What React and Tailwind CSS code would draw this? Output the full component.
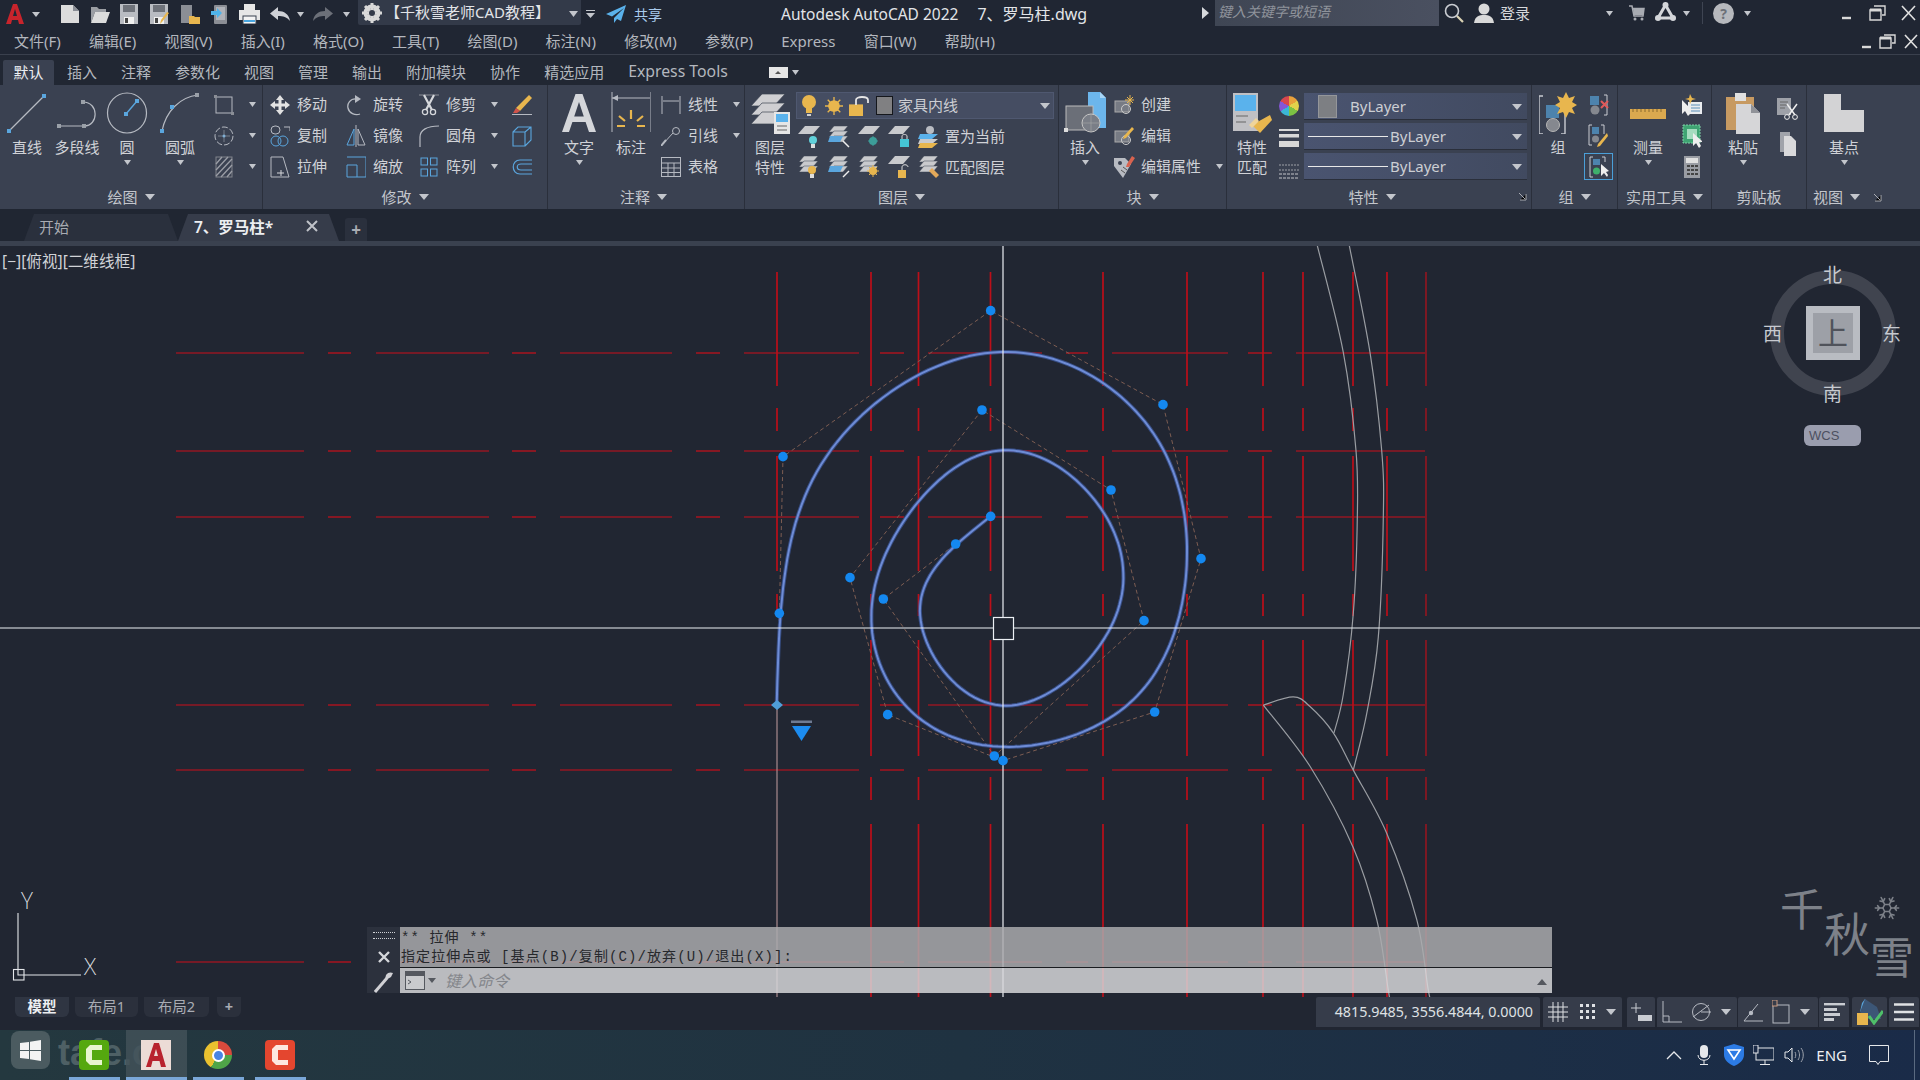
import React from "react";
import { Snowflake } from "lucide-react";

const G = "#b6bac2", B = "#5aa6de", Y = "#e8b64e", W = "#d6d8dc";

const I = ({ w, h, children, className = "" }) => (
  <svg width={w} height={h} viewBox={`0 0 ${w} ${h}`} fill="none" className={`shrink-0 ${className}`}>{children}</svg>
);
const Caret = ({ className = "", w = 8, h = 5, c = "#c3c6cc" }) => (
  <I w={w} h={h} className={className}><polygon points={`0,0 ${w},0 ${w / 2},${h}`} fill={c} /></I>
);

/* ---------- title bar icons ---------- */
const Logo = () => (<I w={18} h={20}><path d="M0 20 L7 0 H11 L18 20 H13 L12 16 H6 L5 20Z M7 12 H11 L9 5Z" fill="#c8242c" fillRule="evenodd" /></I>);
const NewDoc = () => (<I w={20} h={20}><path d="M1 1H13L19 7V19H1Z" fill="#dcdcdc" /><path d="M13 1V7H19" fill="#8a8e96" /></I>);
const Open = () => (<I w={20} h={20}><path d="M1 3H7L9 5H16V8H5L1 19Z" fill="#9b9ea4" /><path d="M5 8H20L16 19H1Z" fill="#dcdcdc" /></I>);
const Save = ({ pen }) => (<I w={20} h={20}><path d="M1 0H19V20H1Z" fill="#b9bcc2" /><rect x="4" y="1" width="12" height="7" fill="#6e727a" /><rect x="5" y="13" width="10" height="7" fill="#f0f0f0" /><rect x="6" y="14" width="3" height="5" fill="#444" />{pen && <path d="M20 9 L13 18 L11 20 L12 16 L18 8Z" fill={Y} />}</I>);
const Publish = () => (<I w={20} h={20}><rect x="1" y="1" width="11" height="18" fill="#8b8e95" /><path d="M9 12H14L15 13H20V20H9Z" fill={Y} /></I>);
const Phone = () => (<I w={17} h={20}><rect x="3" y="1" width="13" height="19" rx="1" fill="#8b8e95" /><rect x="5" y="3" width="9" height="13" fill="#b0b3ba" /><path d="M0 7H6V4L11 9L6 14V11H0Z" fill="#4fb3ea" /></I>);
const Print = () => (<I w={21} h={20}><rect x="5" y="0" width="11" height="6" fill="#e6e6e6" /><rect x="0" y="6" width="21" height="10" fill="#e6e6e6" /><rect x="4" y="12" width="13" height="8" fill="#f4f4f4" stroke="#39404f" /><rect x="5" y="16" width="11" height="2" fill="#4aa6e0" /></I>);
const Undo = ({ c = "#cfd1d6" }) => (<I w={20} h={16}><path d="M8 1V5C14 5 19 8 20 15C17 11 13 10 8 10V14L0 7.5Z" fill={c} /></I>);
const Redo = () => (<I w={20} h={16}><path d="M12 1V5C6 5 1 8 0 15C3 11 7 10 12 10V14L20 7.5Z" fill="#6c7079" /></I>);
const Gear = () => (<I w={20} h={20}><circle cx="10" cy="10" r="6.5" stroke="#d9d9d9" strokeWidth="4" /><path d="M10 0V20M0 10H20M3 3L17 17M17 3L3 17" stroke="#d9d9d9" strokeWidth="3" /><circle cx="10" cy="10" r="3" fill="#333a49" /></I>);
const Plane = () => (<I w={20} h={18}><path d="M20 0L0 9L6 11.5L18 3L8 13V18L11 14L15 16Z" fill="#5ab2ec" /></I>);
const Search = () => (<I w={20} h={20}><circle cx="8" cy="8" r="6.5" stroke="#c9ccd2" strokeWidth="1.6" /><path d="M13 13L19 19" stroke="#dad2b4" strokeWidth="2.2" /></I>);
const User = () => (<I w={20} h={20}><circle cx="10" cy="6" r="5.5" fill="#d9d9d9" /><path d="M0 20C1 13 5 12 10 12C15 12 19 13 20 20Z" fill="#d9d9d9" /></I>);
const Cart = () => (<I w={16} h={16}><path d="M0 1H3L5 11H14L15 3.5H4" stroke="#a8abb2" strokeWidth="1.5" /><path d="M4 4H15L14 10H5Z" fill="#a8abb2" /><circle cx="6" cy="14" r="1.5" fill="#a8abb2" /><circle cx="13" cy="14" r="1.5" fill="#a8abb2" /></I>);
const A360 = () => (<I w={21} h={19}><path d="M10.5 3L18 16H3Z" stroke="#d4d6da" strokeWidth="3" /><circle cx="10.5" cy="3" r="3" fill="#d4d6da" /><circle cx="3" cy="16" r="3" fill="#d4d6da" /><circle cx="18" cy="16" r="3" fill="#d4d6da" /></I>);
const Help = () => (<div className="w-[21px] h-[21px] rounded-full bg-[#b6b8bd] text-[#6c7078] text-[14px] font-bold flex items-center justify-center">?</div>);
const WinBtns = ({ big }) => big ? (
  <I w={76} h={16}>
    <path d="M2 13H11" stroke="#d9d9d9" strokeWidth="2.4" />
    <path d="M34 1H45V10H42M30 5H41V15H30Z" stroke="#d9d9d9" strokeWidth="1.4" /><path d="M30 5H41" stroke="#d9d9d9" strokeWidth="3" />
    <path d="M62 1L75 15M75 1L62 15" stroke="#e0e0e0" strokeWidth="1.6" />
  </I>
) : (
  <I w={56} h={15}>
    <path d="M0 13H9" stroke="#d9d9d9" strokeWidth="2.4" />
    <path d="M22 1H33V9H30M18 4H29V14H18Z" stroke="#d9d9d9" strokeWidth="1.4" /><path d="M18 4H29" stroke="#d9d9d9" strokeWidth="3" />
    <path d="M43 1L55 14M55 1L43 14" stroke="#e0e0e0" strokeWidth="1.6" />
  </I>
);

/* ---------- ribbon icons ---------- */
const dot = (x, y, c = B, s = 4) => <rect x={x - s / 2} y={y - s / 2} width={s} height={s} fill={c} />;
const LineIco = () => (<I w={40} h={40}><path d="M2 38L37 3" stroke={G} strokeWidth="1.2" />{dot(2, 38)}{dot(37, 3)}</I>);
const PlineIco = () => (<I w={42} h={40}><path d="M3 33H28C43 33 43 9 27 9" stroke={G} strokeWidth="1.2" />{dot(3, 33, "#9aa0a8")}{dot(28, 33, "#9aa0a8")}{dot(27, 9, "#9aa0a8")}</I>);
const CircleIco = () => (<I w={42} h={42}><ellipse cx="21" cy="21" rx="19.5" ry="20" stroke={G} strokeWidth="1.2" /><path d="M20 22L31 9" stroke={B} strokeWidth="1.4" />{dot(20, 22)}{dot(31, 9)}</I>);
const ArcIco = () => (<I w={40} h={40}><path d="M2 38C6 18 20 4 38 2" stroke={G} strokeWidth="1.2" />{dot(2, 38)}{dot(12, 14)}{dot(37, 2, "#9aa0a8")}</I>);
const RectIco = () => (<I w={20} h={20}><rect x="2" y="2" width="16" height="16" stroke={G} /><rect x="0" y="0" width="3" height="3" fill="#8a8e96" /><rect x="17" y="17" width="3" height="3" fill="#8a8e96" /></I>);
const HatchIco = () => (<I w={18} h={22}><rect x="1" y="1" width="16" height="20" stroke="#80848c" /><path d="M1 8L7 1M1 14L13 1M1 20L17 3M6 21L17 9M12 21L17 15" stroke="#9b9ea6" strokeWidth="1.3" /></I>);
const EllipseIco = () => (<I w={20} h={20}><circle cx="10" cy="10" r="9" stroke={G} strokeDasharray="6 2" /><circle cx="10" cy="10" r="1.5" fill={B} /><path d="M10 4V16M4 10H16" stroke={G} strokeWidth=".5" /></I>);
const MoveIco = () => (<I w={20} h={20}><path d="M10 0L14 5H11.5V8.5H15V6L20 10L15 14V11.5H11.5V15H14L10 20L6 15H8.5V11.5H5V14L0 10L5 6V8.5H8.5V5H6Z" fill="#e2e2e2" /></I>);
const RotateIco = () => (<I w={20} h={22}><path d="M11 5C4 4 1 10 2 14C3 19 9 22 14 20" stroke={G} strokeWidth="1.3" /><path d="M9 1V9L15 5Z" fill={G} /></I>);
const TrimIco = () => (<I w={20} h={22}><path d="M0 1H20" stroke="#8b8f97" /><path d="M5 1L13 16M15 1L7 16" stroke={W} strokeWidth="2.2" /><circle cx="6" cy="18" r="2.6" stroke={W} strokeWidth="1.3" /><circle cx="14" cy="18" r="2.6" stroke={W} strokeWidth="1.3" /></I>);
const EraseIco = () => (<I w={20} h={22}><path d="M17 1L20 4L8 17L4 14Z" fill={Y} /><path d="M4 14L8 17L5 19H1Z" fill="#d0534a" /><path d="M0 20.5H20" stroke={G} /></I>);
const CopyIco = () => (<I w={20} h={22}><rect x="1" y="1" width="9" height="8" rx="4" stroke={G} /><path d="M14 2H20V6" stroke={G} /><circle cx="6" cy="16" r="5" stroke={B} /><circle cx="13" cy="16" r="5" stroke={B} /></I>);
const MirrorIco = () => (<I w={20} h={22}><path d="M10 0V22" stroke={G} /><path d="M8 4V20H1Z" stroke={B} /><path d="M12 4V20H19Z" stroke={G} /></I>);
const FilletIco = () => (<I w={20} h={22}><path d="M1 22V12C1 5 8 1 20 1" stroke={G} strokeWidth="1.2" /></I>);
const ExplodeIco = () => (<I w={20} h={22}><path d="M1 7H13V21H1ZM1 7L6 2H19V15L13 21M13 7L19 2" stroke={B} strokeWidth="1.1" /></I>);
const StretchIco = () => (<I w={20} h={22}><path d="M1 1H13L19 21H1Z" stroke={G} /><path d="M7 17H14M11 14V20" stroke={W} /></I>);
const ScaleIco = () => (<I w={20} h={22}><path d="M1 1H20V21H1V9H11V21" stroke={B} strokeWidth="1" /></I>);
const ArrayIco = () => (<I w={18} h={20}><g stroke={B}><rect x="1" y="1" width="6.5" height="7" /><rect x="10.5" y="1" width="6.5" height="7" /><rect x="1" y="12" width="6.5" height="7" /><rect x="10.5" y="12" width="6.5" height="7" /></g></I>);
const OffsetIco = () => (<I w={20} h={18}><path d="M20 2H8C-1 2-1 16 8 16H20M20 6H9C4 6 4 12 9 12H20" stroke={B} strokeWidth="1.2" /></I>);
const TextA = () => (<I w={34} h={38}><path d="M0 38L13.5 0H20.5L34 38H27L23.6 28H10.4L7 38ZM12.2 22.5H21.8L17 8Z" fill="#d4d6da" fillRule="evenodd" /></I>);
const DimIco = () => (<I w={40} h={42}><path d="M1 0V40M40 0V40M1 6H39" stroke={G} /><path d="M1 6L7 3V9Z" fill={G} /><path d="M20 18V27M8 24L14 29M32 24L26 29M6 34H14M26 34H34" stroke={Y} strokeWidth="2.2" /></I>);
const LinearIco = () => (<I w={20} h={20}><path d="M1 1V19M19 1V19M2 6H18" stroke={G} /></I>);
const LeaderIco = () => (<I w={20} h={20}><path d="M1 19L12 7" stroke={G} /><circle cx="15" cy="5" r="3.5" stroke={G} /><path d="M0 20L5 14" stroke={G} strokeWidth="2" /></I>);
const TableIco = () => (<I w={20} h={20}><rect x=".5" y=".5" width="19" height="19" stroke={G} /><path d="M.5 6H19.5M.5 11H19.5M.5 15.5H19.5M7 6V19M13 6V19" stroke={G} /></I>);
const LayerBig = () => (<I w={40} h={42}>{[0, 9, 18].map(y => <path key={y} d={`M12 ${y + 2}H35L24 ${y + 14}H1Z`} fill="#cfcfd2" stroke="#3b4251" strokeWidth=".7" />)}<rect x="24" y="20" width="16" height="22" fill="#e6e6e6" /><rect x="26" y="22" width="12" height="8" fill="#5ab2ec" /><path d="M27 34H37M27 38H37" stroke="#666" /></I>);
const Bulb = ({ c = Y }) => (<I w={14} h={22}><circle cx="7" cy="7" r="7" fill={c} /><rect x="4" y="13" width="6" height="5" fill={c} /><rect x="5" y="19" width="4" height="2" fill="#d0d0d0" /></I>);
const Sun = ({ s = 20 }) => (<I w={s} h={s}><g transform={`scale(${s / 20})`}><path d="M10 0V20M0 10H20M3 3L17 17M17 3L3 17" stroke={Y} strokeWidth="1.5" /><circle cx="10" cy="10" r="6.5" fill={Y} /></g></I>);
const LockOpen = ({ w = 20, h = 20, c = Y }) => (<I w={w} h={h}><rect x="0" y={h * .42} width={w * .7} height={h * .58} fill={c} /><path d={`M${w * .35} ${h * .45}V${h * .2}C${w * .35} 0 ${w * .95} 0 ${w * .95} ${h * .2}V${h * .35}`} stroke="#e5e5e5" strokeWidth="1.8" /></I>);
const L2 = ({ n }) => {
  const top = <path d="M7 0H22L15 8H0Z" fill="#c9cacd" />;
  const stack = <g fill="#c9cacd">{[0, 5, 10].map(y => <path key={y} d={`M6 ${y}H20L15 ${y + 6}H1Z`} stroke="#3b4251" strokeWidth=".5" />)}</g>;
  const items = {
    1: <>{top}<circle cx="15" cy="14" r="4" fill="#61d0da" /><rect x="13" y="18" width="4" height="4" fill="#ddd" /></>,
    2: <>{stack}<path d="M2 10H15L12 16H0Z" fill={B} /><path d="M15 15L21 21" stroke="#eee" strokeWidth="1.5" /></>,
    3: <>{top}<circle cx="15" cy="15" r="4" fill="#3d9d99" /><path d="M15 10V20M10 15H20" stroke="#3d9d99" /></>,
    4: <>{top}<rect x="12" y="13" width="9" height="8" fill="#45c5d6" /><path d="M14 13V10C14 8 19 8 19 10V13" stroke="#ddd" /></>,
    5: <><circle cx="12" cy="4" r="4" fill="#b9bcc2" /><path d="M2 8H20L14 13H0Z" fill="#5ab2ec" /><path d="M2 13H20L14 18H0Z" fill="#c9cacd" /><path d="M2 17H20L14 22H0Z" fill={Y} /></>,
    6: <>{stack}<circle cx="14" cy="14" r="4" fill={Y} /><rect x="12" y="18" width="4" height="4" fill="#ddd" /></>,
    7: <>{stack}<path d="M2 10H15L12 16H0Z" fill={B} /><path d="M21 15L15 21" stroke="#eee" strokeWidth="1.5" /></>,
    8: <>{stack}<circle cx="15" cy="15" r="4" fill={Y} /><path d="M15 9V21M9 15H21M11 11L19 19M19 11L11 19" stroke={Y} /></>,
    9: <>{top}<rect x="10" y="14" width="8" height="8" fill={Y} /><path d="M14 14V11C14 8 20 8 20 11" stroke="#ddd" /></>,
    10: <>{stack}<path d="M14 12L21 19L18 22L11 15Z" fill="#e3a95a" /></>,
  };
  return <I w={22} h={22}>{items[n]}</I>;
};
const InsertIco = () => (<I w={42} h={42}><path d="M24 0H36L42 6V36H24Z" fill="#6cb6ec" /><path d="M36 0V6H42" fill="#a7d5f5" /><rect x="2" y="14" width="27" height="24" fill="#6b6f78" stroke="#bbb" /><circle cx="27" cy="31" r="9" fill="#7a7e87" stroke="#c6c6c6" /><path d="M27 22V40M18 31H36" stroke="#aaa" strokeWidth=".6" /><rect x="0" y="36" width="4" height="4" fill="#ddd" /></I>);
const BlockCreate = () => (<I w={20} h={20}><rect x="1" y="6" width="14" height="11" fill="#777b84" stroke="#aaa" /><circle cx="12" cy="14" r="4.5" stroke="#ccc" /><path d="M16 0V10M11 5H20M13 2L19 8M19 2L13 8" stroke={Y} /></I>);
const BlockEdit = () => (<I w={20} h={20}><rect x="1" y="5" width="14" height="11" fill="#777b84" stroke="#aaa" /><circle cx="12" cy="14" r="4.5" stroke="#ccc" /><path d="M18 1L20 3L12 12L9 13L10 10Z" fill={Y} /></I>);
const BlockAttr = () => (<I w={22} h={24}><path d="M1 3H12L18 9L10 23L1 11Z" fill="#b8bbc2" /><circle cx="7" cy="8" r="2" fill="#3b4251" /><path d="M10 12L14 15M8 15L12 18" stroke="#555" /><path d="M19 1L22 3L16 12L13 12L14 9Z" fill="#d9634f" /></I>);
const MatchIco = () => (<I w={40} h={42}><rect x="1" y="1" width="25" height="38" fill="#c0c0c4" /><rect x="3" y="3" width="21" height="16" fill="#5ab2ec" /><path d="M4 24H16M4 30H14" stroke="#666" /><path d="M38 23L40 28L28 41L20 33Z" fill={Y} /><path d="M17 33L24 26L27 29L20 36Z" fill="#efd49b" /></I>);
const Wheel = () => (<div className="w-[20px] h-[20px] rounded-full bg-[conic-gradient(#e9a13b_0_16%,#e2d24b_16%_33%,#7cc243_33%_50%,#3bb6d6_50%_66%,#8556d6_66%_83%,#d8464d_83%)]"></div>);
const Lweight = () => (<I w={20} h={20}><rect y="0" width="20" height="2" fill="#d8d8d8" /><rect y="5" width="20" height="3.5" fill="#d8d8d8" /><rect y="12" width="20" height="6" fill="#d8d8d8" /></I>);
const Transp = () => (<I w={20} h={20}><g stroke="#9da1a8" strokeDasharray="2 1"><path d="M0 3H20M0 8H20" /></g><path d="M0 12H20M0 16H20" stroke="#c3c5ca" strokeDasharray="3 1" /></I>);
const GroupBig = () => (<I w={38} h={42}><path d="M4 4H0V42H4M22 42H26V22" stroke="#c9ccd2" strokeWidth="1.4" /><rect x="7" y="13" width="13" height="13" fill="#4d83ad" /><circle cx="14" cy="33" r="6.5" fill="#85888f" stroke="#b5b5b5" /><path d="M27 0L30 6L36 4L33 10L38 13L33 16L36 22L30 20L27 26L24 20L18 22L21 16L16 13L21 10L18 4L24 6Z" fill={Y} /></I>);
const Ungroup = () => (<I w={20} h={22}><path d="M15 1H18V21H15" stroke="#c9ccd2" /><rect x="1" y="2" width="9" height="9" fill="#4d83ad" /><circle cx="6" cy="16" r="4.5" fill="#85888f" /><path d="M12 7L19 14M19 7L12 14" stroke="#e05a5a" strokeWidth="2" /></I>);
const GroupEdit = () => (<I w={20} h={24}><path d="M4 1H1V21H4M13 1H16V10" stroke="#c9ccd2" /><rect x="4" y="3" width="7" height="7" fill="#4d83ad" /><circle cx="7.5" cy="15" r="3.5" fill="#85888f" /><path d="M19 9L20 12L12 22L9 23L10 20Z" fill={Y} /></I>);
const GroupSel = () => (<div className="w-[29px] h-[27px] border border-[#4a9fd8] flex items-center justify-center"><I w={20} h={22}><path d="M4 1H1V21H4M13 1H16V6" stroke="#c9ccd2" /><rect x="4" y="3" width="7" height="6" fill="#4d83ad" /><circle cx="7.5" cy="15" r="3.5" fill="#3fb06c" /><path d="M12 8V20L15 17L18 21L19 19L17 16L20 15Z" fill="#eee" /></I></div>);
const Ruler = () => (<I w={36} h={12}><rect y="2" width="36" height="10" fill="#dba94f" /><path d="M3 2V5M7 2V5M11 2V5M15 2V5M19 2V5M23 2V5M27 2V5M31 2V5" stroke="#8b6a2e" /></I>);
const QuickSel = () => (<I w={20} h={22}><rect x="6" y="8" width="14" height="12" fill="#e9ecef" /><path d="M9 11H18M9 14H18M9 17H18" stroke="#5b8fb8" /><path d="M0 6V20L3 17L6 22L8 20L6 16H10Z" fill="#eee" /><path d="M8 0L10 4L14 5L10 6L8 10L7 6L3 5L7 4Z" fill={Y} /></I>);
const GreenSel = () => (<I w={20} h={24}><rect x="1" y="1" width="17" height="18" fill="#3fa473" stroke="#7fd1a8" strokeDasharray="2 1" /><rect x="5" y="5" width="10" height="10" fill="#a5dcbf" /><path d="M11 9V22L14 19L17 24L19 22L17 18H21Z" fill="#eee" /></I>);
const Calc = () => (<I w={16} h={22}><rect width="16" height="22" fill="#999ca3" /><rect x="2" y="2" width="12" height="5" fill="#e0e0e0" /><path d="M3 10H6M7 10H10M11 10H14M3 14H6M7 14H10M11 14H14M3 18H6M7 18H10M11 18H14" stroke="#444" strokeWidth="2" /></I>);
const Paste = () => (<I w={34} h={42}><rect x="0" y="5" width="28" height="33" fill="#c79a62" /><rect x="9" y="1" width="11" height="8" fill="#e0e0e0" /><path d="M10 12H25L34 21V42H10Z" fill="#d6d6d8" /><path d="M25 12V21H34" fill="#909298" /></I>);
const Cut = () => (<I w={21} h={22}><rect x="0" y="0" width="14" height="17" fill="#9ea1a8" /><path d="M3 4H11M3 7H11M3 10H8" stroke="#666" /><path d="M10 6L18 17M20 6L12 17" stroke="#eee" strokeWidth="1.5" /><circle cx="10" cy="19" r="2.4" stroke="#eee" /><circle cx="18" cy="19" r="2.4" stroke="#eee" /></I>);
const CopyDoc = () => (<I w={17} h={24}><path d="M1 0H11V20H1Z" fill="#a0a3aa" /><path d="M5 4H12L17 9V24H5Z" fill="#d9d9db" /></I>);
const BaseIco = () => (<I w={40} h={38}><path d="M0 0H17V16H40V38H0Z" fill="#d3d3d5" /></I>);

/* ---------- ribbon layout ---------- */
const Panel = ({ className, title, arrow = true, corner, children, footerClass = "justify-center" }) => (
  <div className={`flex flex-col shrink-0 border-r border-[#2a2f3b] ${className}`}>
    <div className="h-[102px] flex">{children}</div>
    <div className={`h-[20px] flex items-center gap-[7px] text-[15px] leading-[20px] text-[#c3c6cc] relative ${footerClass}`}>
      <span>{title}</span>
      {arrow && <Caret w={10} h={6} />}
      {corner && <svg width="9" height="9" viewBox="0 0 9 9" className="absolute right-[4px] top-[5px]"><path d="M1 1L7 7M8 2V8H2" stroke="#a8abb2" /></svg>}
    </div>
  </div>
);
const Large = ({ className = "", icon, label, label2, caret }) => (
  <div className={`flex flex-col items-center shrink-0 text-[15px] leading-[20px] text-[#d0d2d7] ${className}`}>
    <div className="h-[44px] mt-[6px] flex items-center justify-center">{icon}</div>
    <div className="mt-[2px]">{label}</div>
    {label2 && <div>{label2}</div>}
    {caret && <Caret className="mt-[3px]" w={7} h={5} />}
  </div>
);
const Small = ({ className = "", icon, label, caret, boxClass = "w-[20px]" }) => (
  <div className={`h-[31px] flex items-center text-[15px] text-[#d0d2d7] ${className}`}>
    <div className={`flex justify-center shrink-0 ${boxClass}`}>{icon}</div>
    {label && <span className="ml-[7px]">{label}</span>}
    {caret && <Caret className="ml-[15px]" w={7} h={5} />}
  </div>
);
const Col = ({ className = "", children }) => <div className={`flex flex-col pt-[4px] shrink-0 ${className}`}>{children}</div>;

const Drop = ({ children, className = "" }) => (
  <div className={`h-[26px] flex items-center bg-gradient-to-r from-[#4a5470] to-[#414a60] shadow-[0_1px_0_#2a2f3b] text-[15px] text-[#ccced3] relative ${className}`}>
    {children}
    <Caret className="absolute right-[5px] top-[11px]" w={10} h={6} />
  </div>
);

const Ribbon = () => (
  <div className="h-[124px] bg-[#3a4151] flex shrink-0">
    <Panel className="w-[263px]" title="绘图">
      <Large className="w-[40px] ml-[7px]" icon={<LineIco />} label="直线" />
      <Large className="w-[60px]" icon={<PlineIco />} label="多段线" />
      <Large className="w-[40px]" icon={<CircleIco />} label="圆" caret />
      <Large className="w-[66px]" icon={<ArcIco />} label="圆弧" caret />
      <Col className="ml-[1px]">
        <Small icon={<RectIco />} caret />
        <Small icon={<EllipseIco />} caret />
        <Small icon={<HatchIco />} caret />
      </Col>
    </Panel>
    <Panel className="w-[285px]" title="修改">
      <Col className="w-[76px] ml-[7px]">
        <Small icon={<MoveIco />} label="移动" />
        <Small icon={<CopyIco />} label="复制" />
        <Small icon={<StretchIco />} label="拉伸" />
      </Col>
      <Col className="w-[73px]">
        <Small icon={<RotateIco />} label="旋转" />
        <Small icon={<MirrorIco />} label="镜像" />
        <Small icon={<ScaleIco />} label="缩放" />
      </Col>
      <Col className="w-[93px]">
        <Small icon={<TrimIco />} label="修剪" caret />
        <Small icon={<FilletIco />} label="圆角" caret />
        <Small icon={<ArrayIco />} label="阵列" caret />
      </Col>
      <Col>
        <Small icon={<EraseIco />} />
        <Small icon={<ExplodeIco />} />
        <Small icon={<OffsetIco />} />
      </Col>
    </Panel>
    <Panel className="w-[197px]" title="注释" footerClass="justify-center pr-[5px]">
      <Large className="w-[62px]" icon={<TextA />} label="文字" caret />
      <Large className="w-[42px]" icon={<DimIco />} label="标注" />
      <Col className="ml-[9px]">
        <Small icon={<LinearIco />} label="线性" caret />
        <Small icon={<LeaderIco />} label="引线" caret />
        <Small icon={<TableIco />} label="表格" />
      </Col>
    </Panel>
    <Panel className="w-[314px]" title="图层">
      <Large className="w-[50px]" icon={<LayerBig />} label="图层" label2="特性" />
      <div className="flex flex-col ml-[1px] pt-[7px]">
        <div className="w-[258px] h-[27px] flex items-center bg-[#454d62] border border-[#4f5870] relative text-[15px] text-[#ccced3] pl-[5px]">
          <Bulb />
          <span className="ml-[9px]"><Sun s={18} /></span>
          <span className="ml-[6px]"><LockOpen /></span>
          <div className="w-[17px] h-[19px] bg-[#808082] border border-[#15171c] ml-[7px]"></div>
          <span className="ml-[5px]">家具内线</span>
          <Caret className="absolute right-[3px] top-[10px]" w={10} h={6} />
        </div>
        <div className="h-[31px] mt-[2px] flex items-center gap-[8px] text-[15px] text-[#d0d2d7] pl-[2px]">
          <L2 n={1} /><L2 n={2} /><L2 n={3} /><L2 n={4} /><L2 n={5} /><span className="ml-[-3px]">置为当前</span>
        </div>
        <div className="h-[30px] flex items-center gap-[8px] text-[15px] text-[#d0d2d7] pl-[2px]">
          <L2 n={6} /><L2 n={7} /><L2 n={8} /><L2 n={9} /><L2 n={10} /><span className="ml-[-3px]">匹配图层</span>
        </div>
      </div>
    </Panel>
    <Panel className="w-[168px]" title="块">
      <Large className="w-[44px] ml-[4px]" icon={<InsertIco />} label="插入" caret />
      <Col className="ml-[7px]">
        <Small icon={<BlockCreate />} label="创建" />
        <Small icon={<BlockEdit />} label="编辑" />
        <Small icon={<BlockAttr />} label="编辑属性" caret />
      </Col>
    </Panel>
    <Panel className="w-[305px]" title="特性" corner footerClass="justify-center pr-[14px]">
      <Large className="w-[50px]" icon={<MatchIco />} label="特性" label2="匹配" />
      <div className="flex flex-col shrink-0 pt-[11px] gap-[13px] w-[24px] items-center ml-[0px]">
        <Wheel /><Lweight /><Transp />
      </div>
      <div className="flex flex-col gap-[4px] pt-[8px] ml-[3px] w-[223px]">
        <Drop><div className="w-[19px] h-[23px] bg-[#7d7f83] border border-[#94969a] ml-[14px]"></div><span className="ml-[13px]">ByLayer</span></Drop>
        <Drop><div className="w-[80px] h-[1px] bg-[#e8e8e8] ml-[4px]"></div><span className="ml-[2px]">ByLayer</span></Drop>
        <Drop><div className="w-[80px] h-[1px] bg-[#e8e8e8] ml-[4px]"></div><span className="ml-[2px]">ByLayer</span></Drop>
      </div>
    </Panel>
    <Panel className="w-[86px]" title="组">
      <Large className="w-[38px] ml-[7px]" icon={<GroupBig />} label="组" />
      <Col className="ml-[7px]">
        <Small icon={<Ungroup />} className="pl-[5px]" />
        <Small icon={<GroupEdit />} className="pl-[4px]" />
        <Small icon={<GroupSel />} boxClass="w-[29px]" />
      </Col>
    </Panel>
    <Panel className="w-[94px]" title="实用工具">
      <Large className="w-[40px] ml-[10px]" icon={<Ruler />} label="测量" caret />
      <Col className="ml-[14px]">
        <Small icon={<QuickSel />} />
        <Small icon={<GreenSel />} />
        <Small icon={<Calc />} />
      </Col>
    </Panel>
    <Panel className="w-[95px]" title="剪贴板" arrow={false}>
      <Large className="w-[40px] ml-[11px]" icon={<Paste />} label="粘贴" caret />
      <Col className="ml-[14px]">
        <Small icon={<Cut />} className="h-[39px]" />
        <Small icon={<CopyDoc />} className="h-[26px]" />
      </Col>
    </Panel>
    <div className="flex flex-col w-[76px] relative shrink-0">
      <div className="h-[102px] flex"><Large className="w-[40px] ml-[17px]" icon={<BaseIco />} label="基点" caret /></div>
      <div className="h-[20px] flex items-center pl-[6px] text-[15px] text-[#c3c6cc] gap-[7px]"><span>视图</span><Caret w={10} h={6} />
        <svg width="9" height="9" viewBox="0 0 9 9" className="ml-[6px]"><path d="M1 1L7 7M8 2V8H2" stroke="#a8abb2" /></svg></div>
    </div>
  </div>
);

/* ---------- canvas drawing ---------- */
const catmull = (p) => {
  let d = `M${p[0][0]} ${p[0][1]}`;
  for (let i = 0; i < p.length - 1; i++) {
    const a = p[i - 1] || p[i], b = p[i], c = p[i + 1], e = p[i + 2] || c;
    d += `C${(b[0] + (c[0] - a[0]) / 6).toFixed(1)} ${(b[1] + (c[1] - a[1]) / 6).toFixed(1)} ${(c[0] - (e[0] - b[0]) / 6).toFixed(1)} ${(c[1] - (e[1] - b[1]) / 6).toFixed(1)} ${c[0].toFixed(1)} ${c[1].toFixed(1)}`;
  }
  return d;
};
/* clamped cubic B-spline through control vertices (de Boor) */
const bspline = (P, perSpan = 24) => {
  const n = P.length, kn = [0, 0, 0, 0];
  for (let i = 1; i <= n - 4; i++) kn.push(i);
  const m = n - 3;
  kn.push(m, m, m, m);
  const at = (u) => {
    let k = 3;
    while (k < n - 1 && u >= kn[k + 1]) k++;
    const d = [];
    for (let j = 0; j < 4; j++) d.push([...P[k - 3 + j]]);
    for (let r = 1; r <= 3; r++) for (let j = 3; j >= r; j--) {
      const i = k - 3 + j;
      const al = (u - kn[i]) / (kn[i + 4 - r] - kn[i]);
      d[j] = [(1 - al) * d[j - 1][0] + al * d[j][0], (1 - al) * d[j - 1][1] + al * d[j][1]];
    }
    return d[3];
  };
  const out = [];
  for (let s = 0; s <= m * perSpan; s++) out.push(at(Math.min(s / perSpan, m - 1e-6)));
  return out;
};
const z4 = (a) => a.map(([x, y]) => [x / 3 + 740, y / 3 + 280]);
const z9 = (a) => a.map(([x, y]) => [x / 3 + 1000, y / 2.09 + 240]);

const cvs = z4([[110, 1275], [118, 1000], [129, 530], [752, 92], [1269, 374], [1383, 836], [1244, 1296], [789, 1442], [443, 1304], [330, 893], [726, 390], [1113, 630], [1212, 1022], [763, 1428], [430, 957], [647, 792], [752, 709]]);
/* the curve's fit is nudged a little from the grips where the picture's curve runs */
const fit = z4([[110, 1275], [118, 1000], [129, 530], [752, 102], [1269, 380], [1383, 836], [1244, 1300], [789, 1450], [443, 1304], [330, 893], [726, 402], [1113, 636], [1212, 1022], [763, 1420], [430, 957], [647, 792], [752, 709]]);
const splinePts = bspline(fit).map(p => `${p[0].toFixed(1)},${p[1].toFixed(1)}`).join(" ");
const grips = cvs.slice(1);
const grays = [
  z9([[952, 12], [1030, 235], [1068, 440], [1072, 580], [1060, 780], [1030, 950], [1002, 1030]]),
  z9([[1048, 12], [1110, 235], [1145, 440], [1150, 580], [1135, 830], [1100, 990], [1060, 1108]]),
  z9([[790, 972], [880, 955], [930, 975], [1000, 1030], [1060, 1108], [1160, 1240], [1250, 1420], [1285, 1568], [1300, 1610]]),
  z9([[790, 972], [930, 1100], [1060, 1270], [1130, 1420], [1165, 1568], [1175, 1610]]),
];
const hx = [[176, 304], [328, 351], [376, 489], [512, 536], [560, 672], [696, 720], [744, 859], [880, 904], [928, 1042], [1066, 1088], [1112, 1228], [1248, 1272], [1296, 1425]];
const hy = [353, 451, 517, 705, 770, 962];
const vx = [777, 871, 918.5, 990.5, 1103, 1187, 1263, 1303, 1353, 1387, 1426];
const vy = [[272, 386], [408, 431], [456, 571], [594, 616], [640, 756], [777, 800], [824, 997]];

const Drawing = () => (
  <svg width="1920" height="751" viewBox="0 246 1920 751" fill="none" className="absolute left-0 top-0">
    <g stroke="#cc0f1a" strokeWidth="1.2">
      {hy.map(y => hx.map(([a, b]) => <line key={`${y}-${a}`} x1={a} x2={b} y1={y} y2={y} />))}
    </g>
    <g stroke="#bc0f19" strokeWidth="1.7">
      {vx.map(x => vy.map(([a, b]) => (x === 777 && a >= 640) ? null : <line key={`${x}-${a}`} x1={x} x2={x} y1={a} y2={b} opacity={x === 1426 ? .7 : 1} />))}
    </g>
    <line x1="777" x2="777" y1="705" y2="997" stroke="#a98a8e" strokeWidth="1.2" />
    <g stroke="#9a9da2" strokeWidth="1.2">
      {grays.map((g, i) => <path key={i} d={catmull(g)} />)}
    </g>
    <polyline points={cvs.map(p => p.join(",")).join(" ")} stroke="#7d5d52" strokeWidth="1" strokeDasharray="4 3" />
    <polyline points={splinePts} stroke="#3d5a9e" strokeWidth="4" opacity=".75" strokeLinejoin="round" />
    <polyline points={splinePts} stroke="#6e8cd6" strokeWidth="2" strokeLinejoin="round" />
    <line x1="1003" x2="1003" y1="246" y2="997" stroke="#eceff4" strokeWidth="1.2" />
    <line x1="0" x2="1920" y1="628" y2="628" stroke="#eceff4" strokeWidth="1.2" />
    <rect x="993.5" y="617.5" width="20" height="22" fill="#212632" stroke="#eceff4" strokeWidth="1.2" />
    {grips.map(([x, y], i) => <circle key={i} cx={x} cy={y} r="4.8" fill="#1488f0" />)}
    <path d="M777 700L783 705L777 710L771 705Z" fill="#4f9ed8" />
    <rect x="791" y="720.5" width="21" height="2.5" fill="#6f7b92" />
    <path d="M792 726H811L801.5 741Z" fill="#1c8cf0" />
    {/* UCS icon */}
    <path d="M18 913V975H81" stroke="#e4e6ea" strokeWidth="1.1" />
    <rect x="13.5" y="969.5" width="10.5" height="10.5" stroke="#e4e6ea" strokeWidth="1.1" />
  </svg>
);

const ViewCube = () => (
  <div className="absolute left-[1763px] top-[14px] w-[140px] h-[200px] text-[#c7cad0]">
    <div className="absolute left-[7px] top-[10px] w-[126px] h-[126px] rounded-full border-[14px] border-[#40444f]"></div>
    <div className="absolute left-[43px] top-[46px] w-[54px] h-[54px] bg-[#b9bcc2] flex items-center justify-center">
      <div className="w-[40px] h-[40px] bg-[#9da0a7] flex items-center justify-center text-[30px] leading-[40px] text-[#50535b]">上</div>
    </div>
    <span className="absolute left-[60px] top-[3px] text-[19px] leading-[24px]">北</span>
    <span className="absolute left-[60px] top-[122px] text-[19px] leading-[24px]">南</span>
    <span className="absolute left-0 top-[62px] text-[19px] leading-[24px]">西</span>
    <span className="absolute left-[119px] top-[62px] text-[19px] leading-[24px]">东</span>
    <div className="absolute left-[41px] top-[165px] w-[57px] h-[21px] rounded-[6px] bg-[#9a9dae] text-[#4d5060] text-[13px] leading-[21px] pl-[5px] font-['Liberation_Sans',sans-serif]">WCS</div>
  </div>
);

const Watermark = () => (
  <div className="absolute left-[1780px] top-[636px] w-[135px] h-[100px] text-[#7d8189] font-['Noto_Sans_CJK_SC',sans-serif]">
    <span className="absolute left-[0px] top-[0px] text-[44px] leading-[50px]">千</span>
    <span className="absolute left-[44px] top-[24px] text-[46px] leading-[50px]">秋</span>
    <span className="absolute left-[90px] top-[50px] text-[44px] leading-[46px]">雪</span>
    <Snowflake className="absolute left-[93px] top-[12px]" size={28} strokeWidth={1.4} />
  </div>
);

const CmdLine = () => (
  <div className="absolute left-[367px] top-[681px] w-[1185px] h-[66px] flex">
    <div className="w-[33px] bg-[#2c313d] flex flex-col items-center pt-[5px]">
      <div className="w-[22px] h-[7px] border-y border-dotted border-[#d0d2d6]"></div>
      <I w={12} h={12} className="mt-[12px]"><path d="M1 1L11 11M11 1L1 11" stroke="#d5d7db" strokeWidth="2.4" /></I>
      <I w={20} h={22} className="mt-[8px]"><path d="M1 21L13 7" stroke="#d0d0d4" strokeWidth="3" /><path d="M19 2C15 0 10 3 12 9L17 6Z" fill="#d0d0d4" /></I>
    </div>
    <div className="flex-1 flex flex-col">
      <div className="h-[41px] bg-[rgba(172,172,174,0.84)] border-b border-[#1a1c20] pl-[1px] pt-[2px] text-[14px] leading-[19px] tracking-[1.1px] text-[#26282c] font-['Liberation_Mono','Noto_Sans_CJK_SC',monospace] whitespace-pre">
        <div>{"** 拉伸 **"}</div>
        <div>{"指定拉伸点或 [基点(B)/复制(C)/放弃(U)/退出(X)]:"}</div>
      </div>
      <div className="flex-1 bg-[rgba(216,216,218,0.84)] flex items-center relative text-[16px]">
        <I w={20} h={19} className="ml-[5px]"><rect x=".5" y=".5" width="19" height="18" fill="#c9cacd" stroke="#55585f" /><rect x="1" y="1" width="18" height="4" fill="#55585f" /><path d="M3 9L6 11L3 13" stroke="#55585f" /></I>
        <Caret className="ml-[3px]" w={8} h={5} c="#55585f" />
        <span className="ml-[9px] italic text-[#84868b]">键入命令</span>
        <Caret className="absolute right-[5px] top-[11px] rotate-180" w={10} h={6} c="#55585f" />
      </div>
    </div>
  </div>
);

/* ---------- status & taskbar ---------- */
const Chip = ({ className = "", children }) => (<div className={`h-[30px] flex items-center bg-[#363c4a] rounded-t-[2px] shrink-0 ${className}`}>{children}</div>);
const Status = () => (
  <div className="h-[33px] bg-[#212632] flex items-start shrink-0 relative">
    <div className="flex items-start text-[14.5px] leading-[18px] h-[20px] ml-[15px] gap-[6px]">
      <div className="w-[54px] h-[20px] bg-[#2f3542] text-[#eceef1] font-bold flex items-center justify-center rounded-b-[6px] pb-[2px]">模型</div>
      <div className="w-[63px] h-[20px] bg-[#2b303c] text-[#a9acb3] flex items-center justify-center rounded-b-[6px] pb-[2px]">布局1</div>
      <div className="w-[65px] h-[20px] bg-[#2b303c] text-[#a9acb3] flex items-center justify-center rounded-b-[6px] pb-[2px]">布局2</div>
      <div className="w-[24px] h-[20px] ml-[2px] bg-[#2b303c] text-[#a9acb3] font-bold flex items-center justify-center rounded-b-[6px] pb-[2px]">+</div>
    </div>
    <div className="flex ml-auto mr-[1px]">
      <Chip className="w-[224px] justify-end pr-[7px] text-[14.3px] text-[#dfe1e4] whitespace-nowrap">4815.9485, 3556.4844, 0.0000</Chip>
      <Chip className="w-[79px] ml-[3px]">
        <I w={20} h={20} className="ml-[5px]"><path d="M5 0V20M10 0V20M15 0V20M0 5H20M0 10H20M0 15H20" stroke="#dfe1e4" /></I>
        <I w={16} h={16} className="ml-[12px]"><g fill="#dfe1e4"><rect x="0" y="0" width="3" height="3" /><rect x="6" y="0" width="3" height="3" /><rect x="12" y="0" width="3" height="3" /><rect x="0" y="6" width="3" height="3" /><rect x="6" y="6" width="3" height="3" /><rect x="12" y="6" width="3" height="3" /><rect x="0" y="12" width="3" height="3" /><rect x="6" y="12" width="3" height="3" /><rect x="12" y="12" width="3" height="3" /></g></I>
        <Caret className="ml-[10px]" w={10} h={6} />
      </Chip>
      <Chip className="w-[28px] ml-[5px] justify-center"><I w={21} h={21}><path d="M5 1V11M0 6H10" stroke="#c9ccd2" /><rect x="7" y="13" width="14" height="6" fill="#c9ccd2" /></I></Chip>
      <Chip className="w-[80px] ml-[2px] pl-[5px]">
        <I w={20} h={22}><path d="M1 0V21H20" stroke="#b6bac2" /><path d="M1 15H7V21" stroke="#b6bac2" /></I>
        <I w={20} h={20} className="ml-[9px]"><circle cx="10" cy="10" r="8.5" stroke="#b6bac2" /><path d="M2 15L18 3M10 10H20" stroke="#b6bac2" /></I>
        <Caret className="ml-[10px]" w={10} h={6} />
      </Chip>
      <Chip className="w-[80px] ml-[1px] pl-[5px]">
        <I w={20} h={20}><path d="M1 19L15 2M1 19H20" stroke="#b6bac2" /><circle cx="8" cy="11" r="2.2" fill="#b6bac2" /></I>
        <I w={18} h={24} className="ml-[9px]"><rect x="1" y="5" width="16" height="18" stroke="#b6bac2" /><rect x="0" y="0" width="5" height="6" fill="#363c4a" stroke="#c99a80" /></I>
        <Caret className="ml-[10px]" w={10} h={6} />
      </Chip>
      <Chip className="w-[30px] ml-[1px] justify-center"><I w={21} h={20}><g fill="#c9ccd2"><rect y="1" width="21" height="2.4" /><rect y="6" width="13" height="3" /><rect y="11" width="16" height="3" /><rect y="16" width="10" height="3" /></g></I></Chip>
      <Chip className="w-[35px] ml-[3px] justify-center"><I w={26} h={26}><path d="M8 0L12 9L3 13L5 4Z" fill="#5aa6de" /><path d="M8 0L20 8L24 20H10L3 13Z" fill="#3c5676" /><rect x="0" y="14" width="11" height="12" fill={Y} /><path d="M12 17L17 24L26 12" stroke="#4fc06a" strokeWidth="3" /></I></Chip>
      <Chip className="w-[30px] ml-[2px] justify-center"><I w={20} h={18}><path d="M0 1.5H20M0 9H20M0 16.5H20" stroke="#dfe1e4" strokeWidth="2.6" /></I></Chip>
    </div>
  </div>
);

const Chrome = () => (<div className="w-[28px] h-[28px] rounded-full bg-[conic-gradient(#d94a3c_-30deg,#d94a3c_90deg,#4fa548_90deg,#4fa548_210deg,#e9c12f_210deg,#e9c12f_330deg)] flex items-center justify-center"><div className="w-[13px] h-[13px] rounded-full bg-[#4a85e4] border-2 border-white"></div></div>);
const CamC = ({ bg, fg }) => (<I w={30} h={30}><rect width="30" height="30" rx="4" fill={bg} /><path d="M23 5H11L7 9V21L11 25H23V20H13V10H23Z" fill={fg} /></I>);
const Taskbar = () => (
  <div className="h-[50px] bg-gradient-to-r from-[#24383f] via-[#1f3241] to-[#1a2b48] flex relative shrink-0">
    <div className="absolute left-[11px] top-[1px] w-[39px] h-[38px] bg-[#4b5b60] rounded-[8px] flex items-center justify-center">
      <I w={21} h={21}><path d="M0 3L9 2V10H0ZM10 1.8L21 0V10H10ZM0 11H9V19L0 18ZM10 11H21V21L10 19.2Z" fill="#f3f3f3" /></I>
    </div>
    <div className="absolute left-[58px] top-[3px] text-[36px] leading-[40px] font-bold text-[#4e6065] font-['Liberation_Sans',sans-serif]">tafe.cc</div>
    <div className="absolute left-[126px] top-0 w-[61px] h-[50px] bg-[#44525a]/80"></div>
    {[["left-[69px] w-[51px]"], ["left-[126px] w-[61px]"], ["left-[193px] w-[51px]"], ["left-[255px] w-[51px]"]].map(([c], i) => (<div key={i} className={`absolute bottom-0 h-[3px] bg-[#7aa7d8] ${c}`}></div>))}
    <div className="absolute left-[79px] top-[10px]"><CamC bg="#55a80f" fg="#e8f5d0" /></div>
    <div className="absolute left-[141px] top-[10px]"><I w={30} h={30}><rect width="30" height="30" fill="#ecdcd6" /><path d="M5 27L13 3H18L25 27H20L18.5 21H11.5L10 27ZM13 16H17L15 9Z" fill="#b8232e" fillRule="evenodd" /></I></div>
    <div className="absolute left-[204px] top-[11px]"><Chrome /></div>
    <div className="absolute left-[265px] top-[10px]"><CamC bg="#e4462f" fg="#fde6df" /></div>
    <div className="ml-auto flex items-center h-[50px] pr-[31px] text-[15px] text-[#eef0f3]">
      <I w={16} h={9}><path d="M1 8L8 1L15 8" stroke="#e6e8eb" strokeWidth="1.3" /></I>
      <I w={14} h={20} className="ml-[15px]"><rect x="3" y="0" width="8" height="13" rx="4" fill="#e6e8eb" /><path d="M1 10C1 17 13 17 13 10M7 15V19M3 19.5H11" stroke="#e6e8eb" /></I>
      <I w={20} h={22} className="ml-[13px]"><path d="M10 0L20 3V11C20 16 15 20 10 22C5 20 0 16 0 11V3Z" fill="#2c7be5" /><path d="M4 6H16L10 15Z" stroke="#fff" strokeWidth="1.6" /></I>
      <I w={21} h={20} className="ml-[9px]"><rect x="3" y="3" width="18" height="12" stroke="#e6e8eb" /><rect x="0" y="0" width="5" height="8" fill="#1a2b48" stroke="#e6e8eb" /><path d="M12 15V19M7 19.5H17" stroke="#e6e8eb" /></I>
      <I w={20} h={16} className="ml-[10px]"><path d="M1 5H4L8 1V15L4 11H1Z" stroke="#e6e8eb" /><path d="M11 5C12 7 12 9 11 11M14 3C16 6 16 10 14 13M17 1C20 5 20 11 17 15" stroke="#9da3ad" /></I>
      <span className="ml-[12px] leading-[20px]">ENG</span>
      <I w={20} h={20} className="ml-[22px]"><path d="M.5.5H19.5V16.5H11L9 19.5L7 16.5H.5Z" stroke="#e6e8eb" /></I>
    </div>
    <div className="absolute right-[5px] top-[0px] h-[50px] w-[1px] bg-[#5a6a80]"></div>
  </div>
);

/* ---------- app ---------- */
const menus = ["文件(F)", "编辑(E)", "视图(V)", "插入(I)", "格式(O)", "工具(T)", "绘图(D)", "标注(N)", "修改(M)", "参数(P)", "Express", "窗口(W)", "帮助(H)"];
const tabs = ["插入", "注释", "参数化", "视图", "管理", "输出", "附加模块", "协作", "精选应用"];

export default function App() {
  return (
    <div className="w-[1920px] h-[1080px] overflow-hidden flex flex-col bg-[#212632] font-['Noto_Sans','Noto_Sans_CJK_SC',sans-serif]">
      {/* title bar */}
      <div className="h-[28px] bg-[#202633] flex items-center shrink-0 relative text-[#d6d8dc]">
        <div className="ml-[6px]"><Logo /></div>
        <Caret className="ml-[8px]" />
        <div className="ml-[20px]"><NewDoc /></div>
        <div className="ml-[10px]"><Open /></div>
        <div className="ml-[9px]"><Save /></div>
        <div className="ml-[10px]"><Save pen /></div>
        <div className="ml-[11px]"><Publish /></div>
        <div className="ml-[11px]"><Phone /></div>
        <div className="ml-[11px]"><Print /></div>
        <div className="ml-[10px]"><Undo /></div>
        <Caret className="ml-[7px]" w={7} />
        <div className="ml-[9px]"><Redo /></div>
        <Caret className="ml-[10px]" w={7} />
        <div className="ml-[8px] w-[223px] h-[25px] self-start bg-[#333a49] flex items-center rounded-b-[2px] relative">
          <span className="ml-[4px]"><Gear /></span>
          <span className="ml-[3px] text-[15px] text-[#e2e4e8] whitespace-nowrap">【千秋雪老师CAD教程】</span>
          <Caret className="absolute right-[3px] top-[11px]" w={9} h={6} />
        </div>
        <div className="ml-[5px] flex flex-col gap-[2px] items-center"><div className="w-[9px] h-[1.5px] bg-[#c3c6cc]"></div><Caret w={9} h={5} /></div>
        <div className="ml-[11px]"><Plane /></div>
        <span className="ml-[8px] text-[14px] text-[#a9cbec]">共享</span>
        <span className="absolute left-[781px] top-[3px] text-[15.5px] leading-[22px] text-[#e2e4e8] whitespace-pre">Autodesk AutoCAD 2022<span className="ml-[19px] text-[16px]">7、罗马柱.dwg</span></span>
        <I w={7} h={12} className="absolute left-[1202px] top-[7px]"><polygon points="0,0 7,6 0,12" fill="#d6d8dc" /></I>
        <div className="absolute left-[1215px] top-0 w-[224px] h-[26px] bg-gradient-to-r from-[#3f4654] to-[#4a5060] pl-[3px] text-[14px] leading-[23px] italic text-[#8f939b]">键入关键字或短语</div>
        <div className="absolute left-[1444px] top-[3px]"><Search /></div>
        <div className="absolute left-[1474px] top-[3px]"><User /></div>
        <span className="absolute left-[1500px] top-[2px] text-[15px] leading-[22px]">登录</span>
        <Caret className="absolute left-[1606px] top-[11px]" w={7} />
        <div className="absolute left-[1629px] top-[5px]"><Cart /></div>
        <div className="absolute left-[1655px] top-[2px]"><A360 /></div>
        <Caret className="absolute left-[1683px] top-[11px]" w={7} />
        <div className="absolute left-[1702px] top-[2px] w-[1px] h-[22px] bg-[#3e4452]"></div>
        <div className="absolute left-[1713px] top-[3px]"><Help /></div>
        <Caret className="absolute left-[1744px] top-[11px]" w={7} />
        <div className="absolute left-[1840px] top-[5px]"><WinBtns big /></div>
      </div>

      {/* menu bar */}
      <div className="h-[27px] bg-[#202633] border-b border-[#3a404d] flex items-center shrink-0 pl-[14px] pt-[1px] gap-[28.2px] text-[15px] text-[#b3b7be] relative">
        {menus.map(m => <span key={m} className="whitespace-nowrap">{m}</span>)}
        <div className="absolute left-[1862px] top-[6px]"><WinBtns /></div>
      </div>

      {/* ribbon tabs */}
      <div className="h-[30px] bg-[#212733] flex items-end shrink-0 text-[15px] text-[#b3b7be] relative">
        <div className="ml-[3px] w-[51px] h-[25px] bg-[#3a4151] text-[#eceef1] flex items-center justify-center rounded-t-[2px]">默认</div>
        <div className="absolute inset-0 flex items-center pt-[4px] pl-[67px] gap-[24px] whitespace-nowrap">
          {tabs.map(t => <span key={t}>{t}</span>)}
          <span className="text-[15.8px]">Express Tools</span>
          <div className="ml-[17px] w-[19px] h-[11px] bg-[#e6e6e6] flex items-center justify-center"><Caret className="rotate-180" w={6} h={3} c="#555" /></div>
          <Caret className="ml-[-20px]" w={7} />
        </div>
      </div>

      <Ribbon />

      {/* file tabs */}
      <div className="h-[32px] bg-[#202632] flex items-end shrink-0 pl-[24px] text-[15px]">
        <div className="w-[154px] h-[27px] bg-[#2a303d] text-[#a8abb2] pl-[15px] leading-[27px] [clip-path:polygon(10px_0,calc(100%-10px)_0,100%_100%,0_100%)]">开始</div>
        <div className="w-[161px] h-[27px] bg-[#363c4a] text-[15.5px] text-[#eceef1] font-semibold pl-[16px] leading-[27px] relative [clip-path:polygon(10px_0,calc(100%-10px)_0,100%_100%,0_100%)]">
          7、罗马柱*
          <I w={12} h={12} className="absolute left-[128px] top-[6px]"><path d="M1 1L11 11M11 1L1 11" stroke="#bfc2c8" strokeWidth="2" /></I>
        </div>
        <div className="ml-[6px] w-[22px] h-[23px] bg-[#2a303d] text-[#a8abb2] font-bold text-[17px] flex items-center justify-center rounded-t-[3px]">+</div>
      </div>
      <div className="h-[5px] bg-[#3a414f] shrink-0"></div>

      {/* canvas */}
      <div className="flex-1 relative overflow-hidden">
        <Drawing />
        <div className="absolute left-[2px] top-[4px] text-[15.6px] leading-[22px] text-[#d0d2d7]">[−][俯视][二维线框]</div>
        <span className="absolute left-[21px] top-[642px] text-[23px] leading-[24px] font-extralight text-[#e4e6ea]">Y</span>
        <span className="absolute left-[84px] top-[708px] text-[23px] leading-[24px] font-extralight text-[#e4e6ea]">X</span>
        <ViewCube />
        <Watermark />
        <CmdLine />
      </div>

      <Status />
      <Taskbar />
    </div>
  );
}
